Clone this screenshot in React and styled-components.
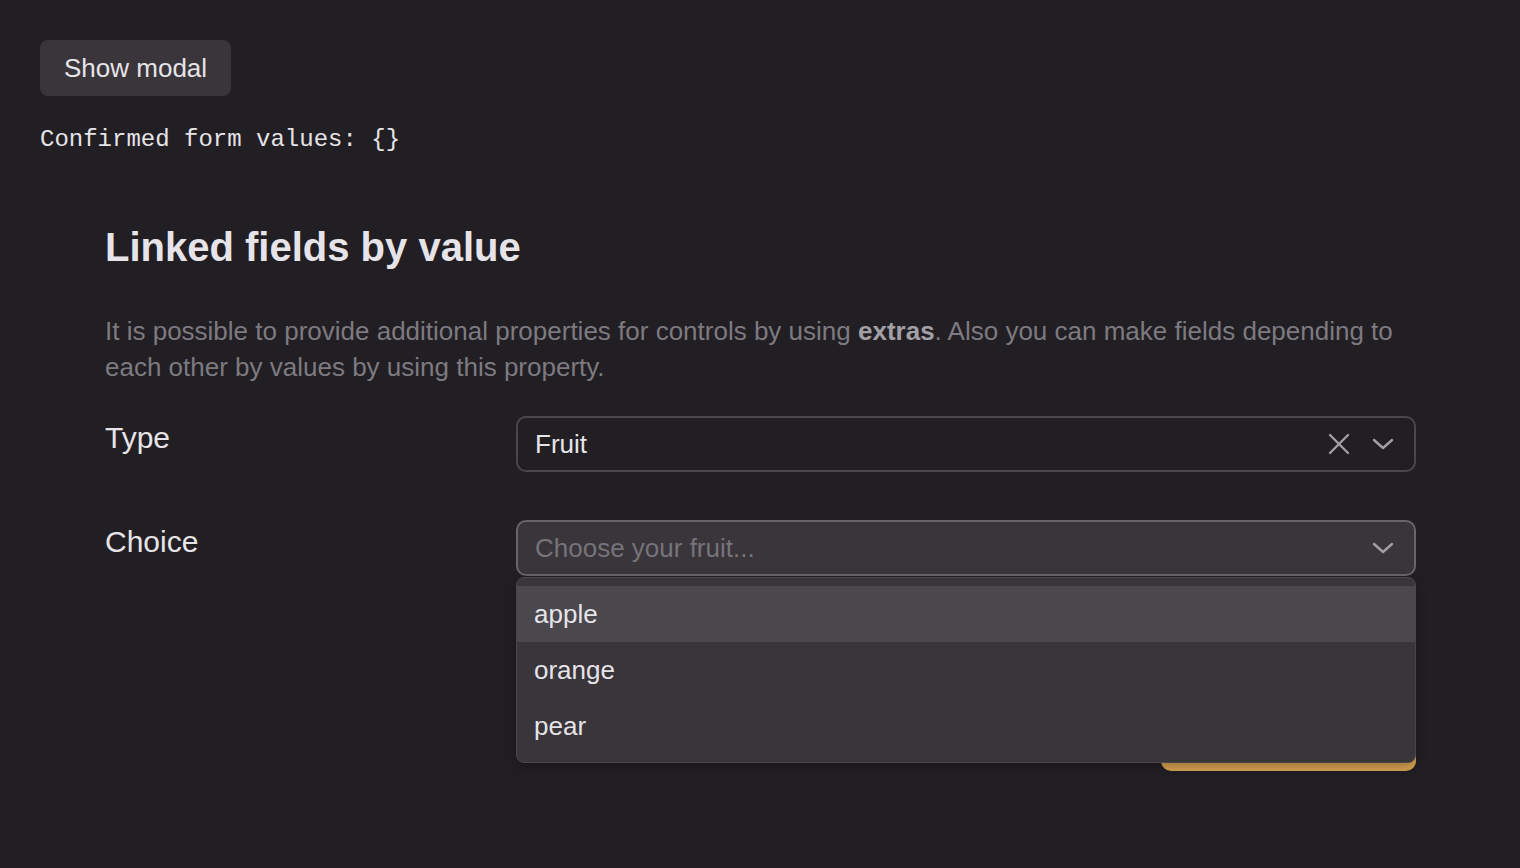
import React from "react";
import styled, { createGlobalStyle } from "styled-components";

const Global = createGlobalStyle`
  html, body {
    margin: 0;
    padding: 0;
    background: #221f24;
    color: #e6e4e8;
    font-family: "Liberation Sans", Arial, sans-serif;
  }
`;

const Page = styled.div`
  padding: 40px;
  min-height: 868px;
  box-sizing: border-box;
`;

const ShowButton = styled.button`
  height: 56px;
  padding: 0 24px;
  border: none;
  border-radius: 8px;
  background: #39353b;
  color: #e6e4e8;
  font-family: inherit;
  font-size: 26px;
`;

const Values = styled.pre`
  margin: 29px 0 0;
  font-family: "Liberation Mono", monospace;
  font-size: 24px;
  line-height: 30px;
  color: #e6e4e8;
`;

const Section = styled.section`
  margin: 68px 64px 0 65px;
`;

const Title = styled.h2`
  margin: 0;
  font-size: 40px;
  line-height: 48px;
  font-weight: 700;
  color: #e6e4e8;
`;

const Text = styled.p`
  margin: 42px 0 0;
  font-size: 26px;
  line-height: 36px;
  color: #7d7a80;

  b {
    color: #a29fa5;
  }
`;

const Form = styled.div`
  margin-top: 31px;
  display: flex;
  flex-direction: column;
  gap: 48px;
`;

const Row = styled.div`
  display: grid;
  grid-template-columns: 411px 1fr;
  align-items: start;
`;

const Label = styled.label`
  font-size: 30px;
  line-height: 44px;
  color: #e6e4e8;
`;

const Field = styled.div`
  position: relative;
`;

const Select = styled.div`
  height: 56px;
  box-sizing: border-box;
  border-radius: 10px;
  border: 2px solid ${(p) => (p.$open ? "#67646a" : "#4a474c")};
  background: ${(p) => (p.$open ? "#39353b" : "#221f24")};
  display: flex;
  align-items: center;
  padding: 0 20px 0 17px;
  font-size: 26px;
  color: ${(p) => (p.$placeholder ? "#76737a" : "#e6e4e8")};
`;

const Value = styled.span`
  flex: 1;
`;

const Icons = styled.div`
  display: flex;
  align-items: center;
  gap: 22px;
  color: #a19ea4;

  svg {
    display: block;
  }
`;

const Menu = styled.div`
  position: absolute;
  left: 0;
  right: 0;
  top: 57px;
  z-index: 5;
  padding: 8px 0;
  background: #39353b;
  border: 1px solid #4a474c;
  border-radius: 8px;
  box-shadow: 0 4px 12px rgba(0, 0, 0, 0.3);
`;

const Option = styled.div`
  height: 56px;
  display: flex;
  align-items: center;
  padding-left: 17px;
  font-size: 26px;
  color: #e6e4e8;
  background: ${(p) => (p.$active ? "#4a484d" : "transparent")};
`;

const Actions = styled.div`
  display: flex;
  justify-content: flex-end;
  margin-top: 139px;
`;

const Submit = styled.button`
  width: 255px;
  height: 56px;
  border: none;
  border-radius: 10px;
  background: #dca553;
  color: #221f24;
  font-family: inherit;
  font-size: 26px;
`;

const Cross = () => (
  <svg width="22" height="22" viewBox="0 0 22 22" fill="none" stroke="currentColor" strokeWidth="2.4" strokeLinecap="round">
    <path d="M2 2l18 18M20 2L2 20" />
  </svg>
);

const Chevron = () => (
  <svg width="22" height="14" viewBox="0 0 22 14" fill="none" stroke="currentColor" strokeWidth="2.4" strokeLinecap="round" strokeLinejoin="round">
    <path d="M2 3l9 8 9-8" />
  </svg>
);

export default function App() {
  const fruits = ["apple", "orange", "pear"];
  return (
    <Page>
      <Global />
      <ShowButton>Show modal</ShowButton>
      <Values>Confirmed form values: {"{}"}</Values>
      <Section>
        <Title>Linked fields by value</Title>
        <Text>
          It is possible to provide additional properties for controls by using <b>extras</b>. Also you can make fields depending to each other by values by using this property.
        </Text>
        <Form>
          <Row>
            <Label>Type</Label>
            <Select>
              <Value>Fruit</Value>
              <Icons>
                <Cross />
                <Chevron />
              </Icons>
            </Select>
          </Row>
          <Row>
            <Label>Choice</Label>
            <Field>
              <Select $open $placeholder>
                <Value>Choose your fruit...</Value>
                <Icons>
                  <Chevron />
                </Icons>
              </Select>
              <Menu>
                {fruits.map((f, i) => (
                  <Option key={f} $active={i === 0}>
                    {f}
                  </Option>
                ))}
              </Menu>
            </Field>
          </Row>
        </Form>
        <Actions>
          <Submit>Submit</Submit>
        </Actions>
      </Section>
    </Page>
  );
}
